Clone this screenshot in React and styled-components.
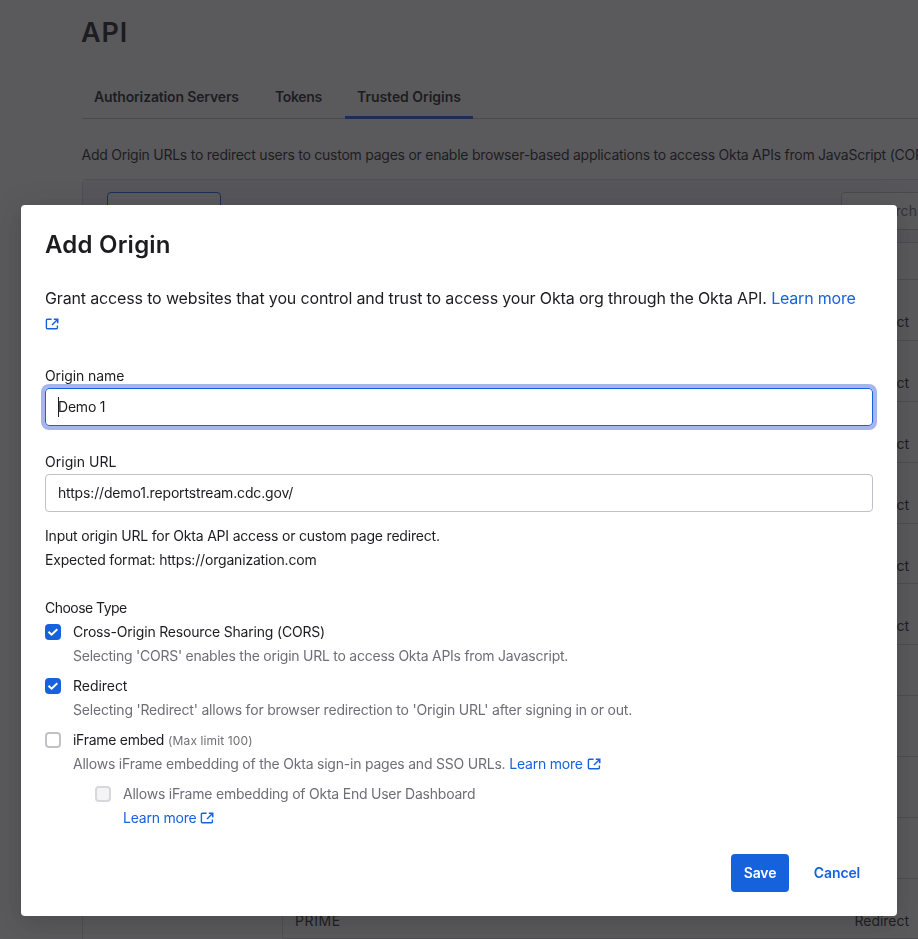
import React from "react";
import styled, { createGlobalStyle, css } from "styled-components";

const GlobalStyle = createGlobalStyle`
  *, *::before, *::after { box-sizing: border-box; }
  html, body { margin: 0; height: 100%; overflow: hidden; }
  body {
    background: #fff;
    color: #1d1d21;
    font-family: Inter, "Liberation Sans", sans-serif;
    font-size: 14px;
    line-height: 24px;
  }
`;

const track = css`
  letter-spacing: ${(p) => p.$track ?? 0}px;
  white-space: nowrap;
`;

const Text = styled.span`
  ${track}
`;

/* ---------- page behind the dialog ---------- */

const Page = styled.main`
  width: 918px;
  height: 939px;
  padding-left: 82px;
  overflow: hidden;
`;

const PageTitle = styled.h1`
  margin: 0 0 0 -1px;
  padding-top: 16px;
  font-size: 27px;
  font-weight: 600;
  line-height: 34px;
  ${track}
`;

const TabBar = styled.nav`
  display: flex;
  height: 43px;
  margin-top: 26px;
  border-bottom: 1px solid #c1c1c8;
`;

const Tab = styled.a`
  height: 43px;
  width: ${(p) => p.$width}px;
  padding: 9px 0 0 12px;
  border-bottom: ${(p) => (p.$active ? "3px solid #1662dd" : "0")};
  font-weight: 600;
  ${track}
`;

const Intro = styled.p`
  margin: 24px 0 0 -0.5px;
  ${track}
`;

const Panel = styled.section`
  width: 1000px;
  margin-top: 12px;
  border: 1px solid #d7d7dc;
  border-radius: 4px 4px 0 0;
`;

const Toolbar = styled.div`
  display: flex;
  justify-content: space-between;
  height: 63px;
  padding: 12px 24px;
  background: #f1eff8;
  border-bottom: 1px solid #c9c9d0;
`;

const AddButton = styled.button`
  width: 114px;
  height: 38px;
  background: #fff;
  border: 1px solid #1662dd;
  border-radius: 4px;
`;

const SearchBox = styled.div`
  width: 216px;
  height: 38px;
  padding: 6px 0 0 28px;
  background: #fff;
  border: 1px solid #c1c1c8;
  border-radius: 4px;
  color: #6e6e78;
  ${track}
`;

const PanelBody = styled.div`
  display: grid;
  grid-template-columns: 200px 1fr;
`;

const FilterColumn = styled.aside`
  border-right: 1px solid #d7d7dc;
`;

const TableHead = styled.div`
  height: 37px;
  border-bottom: 1px solid #d0d0d6;
`;

const TableRow = styled.div`
  display: grid;
  grid-template-columns: 559.5px 1fr;
  height: ${(p) => p.$height}px;
  padding: 30px 0 0 12px;
  border-bottom: 1px solid #d0d0d6;
`;

/* ---------- dialog ---------- */

const Overlay = styled.div`
  position: fixed;
  inset: 0;
  padding: 205px 21px 23px;
  background: rgba(29, 29, 33, 0.73);
`;

const Dialog = styled.section`
  width: 876px;
  height: 711px;
  padding: 25px 24px 24px;
  background: #fff;
  border-radius: 4px;
  box-shadow: 0 6px 28px rgba(29, 29, 33, 0.26);
`;

const DialogTitle = styled.h2`
  margin: 0;
  font-size: 24px;
  font-weight: 600;
  line-height: 30px;
  ${track}
`;

const Lead = styled.p`
  margin: 26px 0 0;
  font-size: 16px;
  line-height: 25px;
`;

const Link = styled.a`
  color: #1662dd;
  ${track}
`;

const Field = styled.div`
  display: flex;
  flex-direction: column;
  margin-top: ${(p) => p.$top}px;
`;

const Label = styled.label`
  ${track}
`;

const Input = styled.div`
  display: flex;
  align-items: center;
  height: 38px;
  padding-left: 12px;
  border: 1px solid ${(p) => (p.$focused ? "#1662dd" : "#c1c1c8")};
  border-radius: 4px;
  box-shadow: ${(p) => (p.$focused ? "0 0 0 4px #a7b5ec" : "none")};
  ${track}
`;

const Caret = styled.i`
  width: 1px;
  height: 20px;
  margin-right: -1px;
  background: #1d1d21;
`;

const Help = styled.div`
  display: flex;
  flex-direction: column;
  margin-top: 12px;
`;

const Group = styled.div`
  display: flex;
  flex-direction: column;
  gap: 6px;
`;

const GroupLabel = styled.div`
  margin-top: 24px;
  ${track}
`;

const Option = styled.div`
  display: grid;
  grid-template-columns: 16px 1fr;
  column-gap: 12px;
  padding-left: ${(p) => (p.$nested ? 50 : 0)}px;
`;

const OptionText = styled.div`
  display: flex;
  flex-direction: column;
`;

const OptionLine = styled.div`
  height: 24px;
`;

const Muted = styled.span`
  color: #6e6e78;
  font-size: ${(p) => (p.$small ? 12 : 14)}px;
  ${track}
`;

const Box = styled.span`
  display: grid;
  place-items: center;
  width: 16px;
  height: 16px;
  margin-top: 4px;
  border-radius: 4px;
  border: 2px solid ${(p) => (p.$checked ? "#1662dd" : p.$disabled ? "#d7d7dc" : "#c1c1c8")};
  background: ${(p) => (p.$checked ? "#1662dd" : p.$disabled ? "#f4f4f4" : "#fff")};
`;

const Footer = styled.footer`
  display: flex;
  justify-content: flex-end;
  gap: 12px;
  margin-top: 24px;
`;

const Button = styled.button`
  width: ${(p) => p.$width}px;
  height: 38px;
  padding: 0;
  border: 0;
  border-radius: 4px;
  font: 600 14px/24px Inter, "Liberation Sans", sans-serif;
  background: ${(p) => (p.$primary ? "#1662dd" : "transparent")};
  color: ${(p) => (p.$primary ? "#fff" : "#1662dd")};
  ${track}
`;

const IconSvg = styled.svg`
  display: inline-block;
  width: 14px;
  height: 12px;
  vertical-align: -1px;
  margin-left: ${(p) => p.$left ?? 0}px;
`;

function ExternalIcon({ left }) {
  return (
    <IconSvg viewBox="0 0 14 12" $left={left} fill="none" stroke="#1662dd" strokeWidth="1.4">
      <path d="M6.6 1.2H2.4Q1.4 1.2 1.4 2.2V9.8Q1.4 10.8 2.4 10.8H11.4Q12.4 10.8 12.4 9.8V7.6" />
      <path d="M7 7L12 2" />
      <path d="M8.8 1.3H12.7V5.2" strokeWidth="1.6" />
    </IconSvg>
  );
}

function Checkbox({ checked, disabled }) {
  return (
    <Box $checked={checked} $disabled={disabled}>
      {checked && (
        <svg width="12" height="12" viewBox="0 0 12 12" fill="none" stroke="#fff" strokeWidth="2">
          <path d="M1.5 5.7L4.6 8.7L10.3 3.2" />
        </svg>
      )}
    </Box>
  );
}

const ROWS = [
  { height: 61, type: true },
  { height: 61, type: true },
  { height: 61, type: true },
  { height: 61, type: true },
  { height: 60, type: true },
  { height: 61, type: true },
  { height: 51 },
  { height: 61 },
  { height: 61 },
  { height: 61 },
  { height: 60, name: "PRIME", type: true },
];

function OriginsPage() {
  return (
    <Page>
      <PageTitle $track={0.8}>API</PageTitle>
      <TabBar>
        <Tab $width={181} $track={-0.15}>Authorization Servers</Tab>
        <Tab $width={82} $track={-0.35}>Tokens</Tab>
        <Tab $width={128} $track={-0.04} $active>Trusted Origins</Tab>
      </TabBar>
      <Intro $track={-0.249}>
        Add Origin URLs to redirect users to custom pages or enable browser-based applications to
        access Okta APIs from JavaScript (CORS).
      </Intro>
      <Panel>
        <Toolbar>
          <AddButton />
          <SearchBox $track={0.1}>Search</SearchBox>
        </Toolbar>
        <PanelBody>
          <FilterColumn />
          <div>
            <TableHead />
            {ROWS.map((row, i) => (
              <TableRow key={i} $height={row.height}>
                <Text $track={0.6}>{row.name}</Text>
                {row.type && <Text $track={-0.02}>Redirect</Text>}
              </TableRow>
            ))}
          </div>
        </PanelBody>
      </Panel>
    </Page>
  );
}

export default function App() {
  return (
    <>
      <GlobalStyle />
      <OriginsPage />
      <Overlay>
        <Dialog role="dialog">
          <DialogTitle $track={0.22}>Add Origin</DialogTitle>
          <Lead>
            <Text $track={-0.148}>
              Grant access to websites that you control and trust to access your Okta org through
              the Okta API.
            </Text>{" "}
            <Link $track={-0.2}>Learn more</Link>
            <br />
            <ExternalIcon />
          </Lead>

          <Field $top={28}>
            <Label $track={-0.1}>Origin name</Label>
            <Input $focused $track={-0.2}>
              <Caret />
              Demo 1
            </Input>
          </Field>
          <Field $top={24}>
            <Label $track={0.03}>Origin URL</Label>
            <Input $track={-0.16}>https://demo1.reportstream.cdc.gov/</Input>
          </Field>
          <Help>
            <Text $track={-0.2}>
              Input origin URL for Okta API access or custom page redirect.
            </Text>
            <Text $track={-0.18}>Expected format: https://organization.com</Text>
          </Help>

          <GroupLabel $track={-0.54}>Choose Type</GroupLabel>
          <Group>
            <Option>
              <Checkbox checked />
              <OptionText>
                <Text $track={-0.187}>Cross-Origin Resource Sharing (CORS)</Text>
                <Muted $track={-0.246}>
                  Selecting 'CORS' enables the origin URL to access Okta APIs from Javascript.
                </Muted>
              </OptionText>
            </Option>
            <Option>
              <Checkbox checked />
              <OptionText>
                <Text $track={-0.04}>Redirect</Text>
                <Muted $track={-0.195}>
                  Selecting 'Redirect' allows for browser redirection to 'Origin URL' after signing
                  in or out.
                </Muted>
              </OptionText>
            </Option>
            <Option>
              <Checkbox />
              <OptionText>
                <OptionLine>
                  <Text $track={-0.28}>iFrame embed</Text>{" "}
                  <Muted $small $track={0.12}>(Max limit 100)</Muted>
                </OptionLine>
                <OptionLine>
                  <Muted $track={-0.22}>
                    Allows iFrame embedding of the Okta sign-in pages and SSO URLs.
                  </Muted>{" "}
                  <Link $track={-0.22}>Learn more</Link>
                  <ExternalIcon left={4} />
                </OptionLine>
              </OptionText>
            </Option>
            <Option $nested>
              <Checkbox disabled />
              <OptionText>
                <Muted $track={-0.226}>Allows iFrame embedding of Okta End User Dashboard</Muted>
                <OptionLine>
                  <Link $track={-0.22}>Learn more</Link>
                  <ExternalIcon left={4} />
                </OptionLine>
              </OptionText>
            </Option>
          </Group>

          <Footer>
            <Button $primary $width={58} $track={-0.1}>Save</Button>
            <Button $width={72} $track={-0.12}>Cancel</Button>
          </Footer>
        </Dialog>
      </Overlay>
    </>
  );
}
